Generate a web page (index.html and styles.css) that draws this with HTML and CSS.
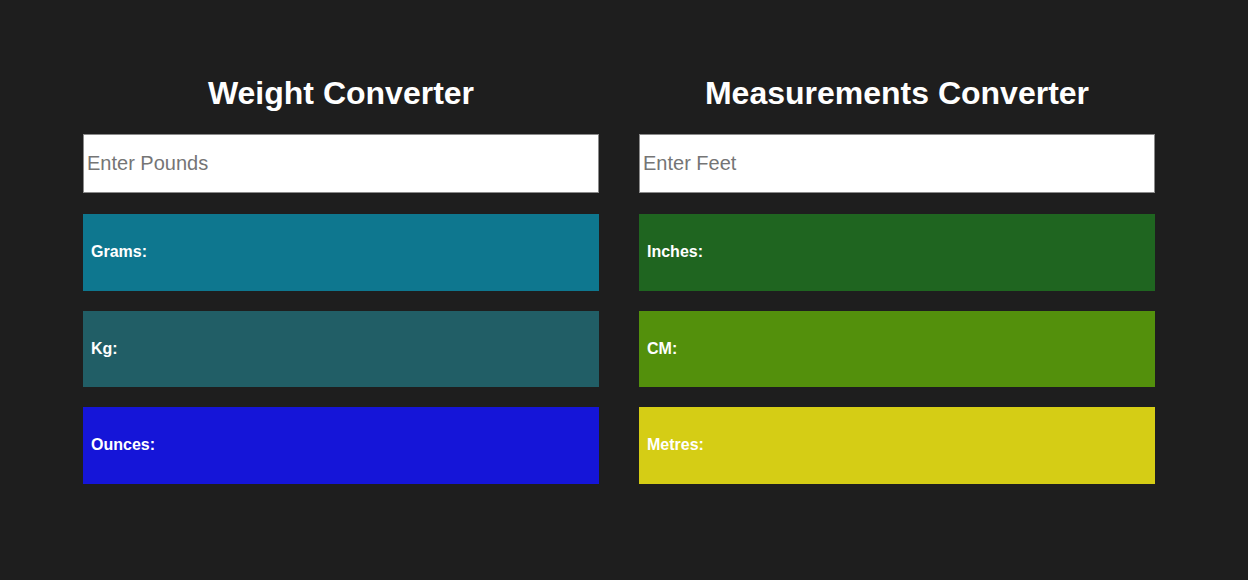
FILE: index.html
```html
<!DOCTYPE html>
<html>
<head>
<meta charset="utf-8">
<link rel="stylesheet" href="styles.css">
</head>
<body>
<div class="page">
  <section class="conv">
    <h1 class="title">Weight Converter</h1>
    <input class="field" type="text" placeholder="Enter Pounds">
    <div class="box grams">Grams:</div>
    <div class="box kg">Kg:</div>
    <div class="box ounces">Ounces:</div>
  </section>
  <section class="conv">
    <h1 class="title">Measurements Converter</h1>
    <input class="field" type="text" placeholder="Enter Feet">
    <div class="box inches">Inches:</div>
    <div class="box cm">CM:</div>
    <div class="box metres">Metres:</div>
  </section>
</div>
</body>
</html>
```

FILE: styles.css
```css
html, body {
  margin: 0;
  padding: 0;
  background: #1e1e1e;
  font-family: "Liberation Sans", Arial, sans-serif;
}
.page {
  display: flex;
  gap: 40px;
  padding: 75px 0 0 83px;
}
.conv {
  width: 516px;
  display: flex;
  flex-direction: column;
}
.title {
  margin: 0 0 22px;
  font-size: 32px;
  line-height: 37px;
  font-weight: bold;
  color: #ffffff;
  text-align: center;
}
.field {
  box-sizing: border-box;
  width: 516px;
  height: 59px;
  margin: 0 0 21px;
  padding: 0 3px;
  border: 1px solid #8a8a8a;
  background: #fff;
  font-family: "Liberation Sans", Arial, sans-serif;
  font-size: 20px;
  color: #222;
  outline: none;
}
.field::placeholder {
  color: #757575;
}
.box {
  height: 76.5px;
  margin-bottom: 20px;
  display: flex;
  align-items: center;
  padding-left: 8px;
  color: #fff;
  font-weight: bold;
  font-size: 16px;
}
.grams { background: #0e778f; }
.kg { background: #215e66; }
.ounces { background: #1515d8; }
.inches { background: #1f6520; }
.cm { background: #53900c; }
.metres { background: #d5cd15; }
```
